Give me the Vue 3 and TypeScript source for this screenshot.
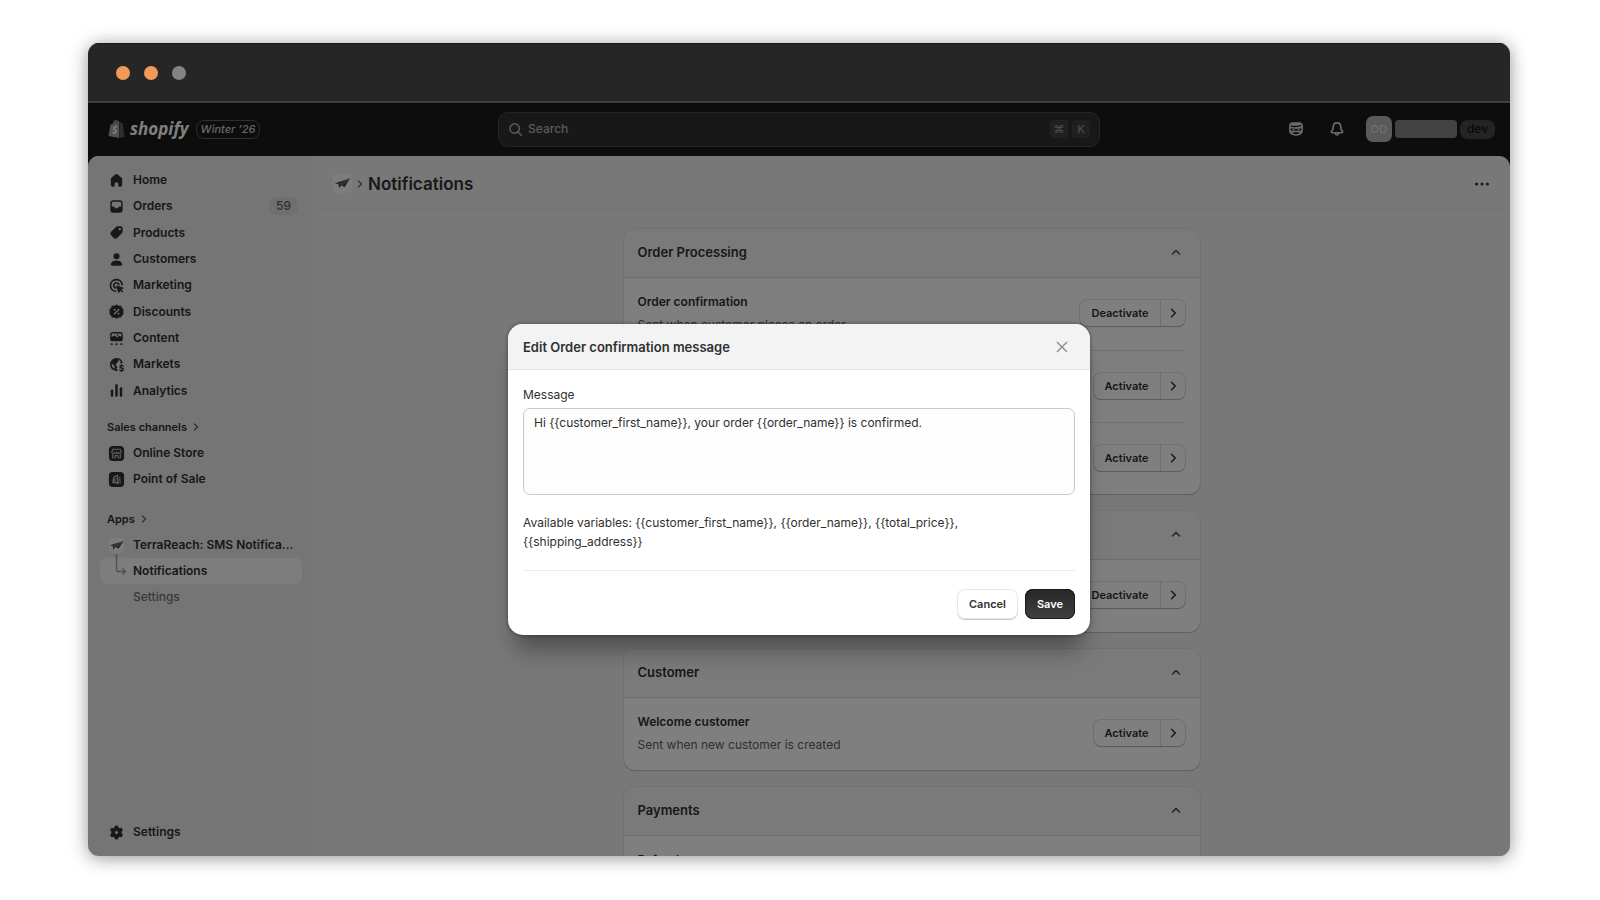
<script setup lang="ts">
import { ref } from 'vue'

interface NavItem {
  label: string
  icon: string
  badge?: string
}

interface Row {
  title?: string
  description?: string
  action?: string
}

interface Section {
  title: string
  rows: Row[]
}

const icons: Record<string, string> = {
  home: '<path d="M8.7 3.7a2 2 0 0 1 2.6 0l4 3.5A2.2 2.2 0 0 1 16 8.9v5.6a2 2 0 0 1-2 2h-1.2a.8.8 0 0 1-.8-.8v-2.2a1.5 1.5 0 0 0-1.5-1.5h-1A1.5 1.5 0 0 0 8 13.5v2.2a.8.8 0 0 1-.8.8H6a2 2 0 0 1-2-2V8.9a2.2 2.2 0 0 1 .7-1.7z"/>',
  orders: '<path fill-rule="evenodd" d="M6.5 3.500A3 3 0 0 0 3.500 6.500v7a3 3 0 0 0 3 3h7a3 3 0 0 0 3-3v-7a3 3 0 0 0-3-3zM5 6.500A1.500 1.500 0 0 1 6.500 5h7A1.500 1.500 0 0 1 15 6.500V10h-1.700c-.6 0-1.100.3-1.400.8l-.3.6a.8.8 0 0 1-.7.400H9.100a.8.8 0 0 1-.7-.4l-.3-.6A1.600 1.600 0 0 0 6.700 10H5z"/>',
  products: '<path fill-rule="evenodd" d="M11.300 3.500h3a2.300 2.300 0 0 1 2.200 2.200v3a3 3 0 0 1-.9 2.100l-4.900 4.900a2.500 2.500 0 0 1-3.500 0l-2.900-2.900a2.500 2.500 0 0 1 0-3.500l4.900-4.900a3 3 0 0 1 2.100-.9zM13.500 7.700a1.200 1.200 0 1 0 0-2.400 1.200 1.200 0 0 0 0 2.400z"/>',
  customers: '<circle cx="10" cy="6.500" r="3.200"/><path d="M10 11c-3 0-5.200 1.300-6 3.400-.4 1 .4 2.100 1.500 2.100h9c1.100 0 1.900-1.100 1.500-2.100-.8-2.100-3-3.400-6-3.400z"/>',
  marketing: '<path fill="none" stroke="currentColor" stroke-width="1.700" stroke-linecap="round" d="M16 9a6.200 6.200 0 1 0-7 7.100M12.600 9.200A2.800 2.800 0 1 0 9.200 12.600"/><path d="M10.200 9.900l6.800 2.300c.6.200.6 1 0 1.200l-2 .9 2 2-1.100 1.100-2-2-.9 1.900c-.2.600-1 .5-1.200 0l-2.200-6.700c-.1-.4.200-.8.600-.7z"/>',
  discounts: '<path fill-rule="evenodd" d="M8.400 3.600a2.200 2.200 0 0 1 3.200 0l.5.400.7-.1a2.200 2.200 0 0 1 2.800 1.700l.2.900.7.400a2.200 2.200 0 0 1 .7 3.100l-.2.400.2.500a2.200 2.200 0 0 1-1 3l-.5.300-.1.500a2.200 2.200 0 0 1-2.700 1.700l-.8-.1-.5.400a2.200 2.200 0 0 1-3.200 0l-.5-.4-.8.100a2.200 2.200 0 0 1-2.700-1.700l-.1-.6-.6-.3a2.200 2.200 0 0 1-.9-3l.2-.400-.2-.4a2.200 2.200 0 0 1 .8-3.100l.6-.4.200-.8a2.200 2.200 0 0 1 2.700-1.800l.8.100zM12.400 6.900L6.900 12.400l.9.900 5.500-5.500zM8 9a1 1 0 1 0 0-2 1 1 0 0 0 0 2zM12.200 13.200a1 1 0 1 0 0-2 1 1 0 0 0 0 2z"/>',
  content: '<path fill-rule="evenodd" d="M6 3.200a2.700 2.700 0 0 0-2.700 2.700v4.400A2.700 2.700 0 0 0 6 13h8a2.700 2.700 0 0 0 2.700-2.700V5.900A2.700 2.700 0 0 0 14 3.200zM6 4.700h8c.7 0 1.200.5 1.200 1.200v2.300l-.8-.6a2 2 0 0 0-2.500.2l-1.200 1.100-1.800-1.500a2 2 0 0 0-2.500 0l-1.600 1.300V5.900c0-.7.500-1.200 1.200-1.200zM11 7a.9.9 0 1 0 0-1.800A.9.900 0 0 0 11 7z"/><path d="M3.500 15.200h2.700v1.500H3.500zM8.600 15.200h2.800v1.500H8.600zM13.800 15.200h2.700v1.500h-2.700z"/>',
  markets: '<path fill-rule="evenodd" d="M10 3.200a6.800 6.800 0 1 0 1.600 13.400l-1.300-1.800c-.3-.4-.3-1 .1-1.400l.5-.5-1.500-2.400a1 1 0 0 1 .1-1.100l2.500-2.800c.2-.2.300-.6.200-.9l-.6-1.300L13 5.500l1.500 1.400-.8 2.100 2.900-.7A6.800 6.800 0 0 0 10 3.200zM5 9l2.800 2.300.5 3.300A5.300 5.300 0 0 1 5 9z"/><path fill="none" stroke="currentColor" stroke-width="1.500" stroke-linecap="round" d="M17 11.700c-.6-.7-3.300-.8-3.300.8 0 1.700 3.500.8 3.500 2.600 0 1.600-2.800 1.600-3.700.6M15.400 10.200v.8M15.400 16.600v.8"/>',
  analytics: '<rect x="4" y="9" width="2.600" height="7.500" rx="1.100"/><rect x="8.700" y="3.500" width="2.600" height="13" rx="1.100"/><rect x="13.400" y="6.500" width="2.600" height="10" rx="1.100"/>',
  settings: '<path fill-rule="evenodd" d="M8.800 3.200h2.400l.6 1.900 1.300.8 2-.5 1.200 2.100L15 9v2l1.300 1.500-1.200 2.100-2-.5-1.300.8-.6 1.900H8.800l-.6-1.900-1.300-.8-2 .5-1.200-2.100L5 11V9L3.700 7.500l1.200-2.100 2 .5 1.300-.8zM10 12a2 2 0 1 0 0-4 2 2 0 0 0 0 4z" stroke="currentColor" stroke-width="1" stroke-linejoin="round"/>',
  store: '<rect x="2" y="2" width="16" height="16" rx="4"/><path fill="none" stroke="#bdbdbd" stroke-width="1.200" stroke-linejoin="round" d="M6 5.500h8l1 3c0 1.600-2.400 1.600-2.600.2-.3 1.500-2.200 1.500-2.400 0-.2 1.500-2.100 1.500-2.400 0C7.400 10.100 5 10.100 5 8.500zM6 10.500v4h2.500v-2.200h3v2.200H14v-4"/>',
  pos: '<rect x="2" y="2" width="16" height="16" rx="4"/><path fill="#bdbdbd" d="M6.500 7l5-2.200 1 9.900-7-1z"/><path fill="#8c8c8c" d="M12.300 6.500l1.600.7.900 6.700-1.700.7z"/><path fill="none" stroke="#303030" stroke-width="1.200" d="M10.700 8c-1-.6-2.400-.1-2.300.9.100.8 1.900 1 1.800 2-.1 1.100-1.500 1.200-2.500.6"/>',
}

const mainNav: NavItem[] = [
  { label: 'Home', icon: 'home' },
  { label: 'Orders', icon: 'orders', badge: '59' },
  { label: 'Products', icon: 'products' },
  { label: 'Customers', icon: 'customers' },
  { label: 'Marketing', icon: 'marketing' },
  { label: 'Discounts', icon: 'discounts' },
  { label: 'Content', icon: 'content' },
  { label: 'Markets', icon: 'markets' },
  { label: 'Analytics', icon: 'analytics' },
]

const channels: NavItem[] = [
  { label: 'Online Store', icon: 'store' },
  { label: 'Point of Sale', icon: 'pos' },
]

const sections: Section[] = [
  {
    title: 'Order Processing',
    rows: [
      { title: 'Order confirmation', description: 'Sent when customer places an order', action: 'Deactivate' },
      { action: 'Activate' },
      { action: 'Activate' },
    ],
  },
  { title: '', rows: [{ action: 'Deactivate' }] },
  {
    title: 'Customer',
    rows: [{ title: 'Welcome customer', description: 'Sent when new customer is created', action: 'Activate' }],
  },
  { title: 'Payments', rows: [{ title: 'Refund' }] },
]

const message = ref('Hi {{customer_first_name}}, your order {{order_name}} is confirmed.')
const variables = ['customer_first_name', 'order_name', 'total_price', 'shipping_address']
  .map((name) => `{{${name}}}`)
  .join(', ')
</script>

<template>
  <div class="page">
    <div class="window">
      <div class="titlebar">
        <span class="dot"></span>
        <span class="dot"></span>
        <span class="dot muted"></span>
      </div>

      <div class="screen">
        <header class="topbar">
          <div class="brand">
            <svg class="bag" viewBox="0 0 18 20" aria-hidden="true">
              <path fill="#a3a3a3" d="M2.600 5.300l2.300-.7C5.500 2.300 7 .5 8.700.5c.8 0 1.300.5 1.600 1.300l1.400-.2.300 18L.5 17.500z" />
              <path fill="#5c5c5c" d="M12.100 2l1.300 1.500 2 .2 2.100 14.500-5.300 1.400z" />
              <path fill="none" stroke="#5c5c5c" stroke-width=".9" d="M6 5.300c.3-2 1.500-3.700 2.700-3.700 1 0 1.300 1.200 1.200 2.600" />
              <path fill="none" stroke="#f2f2f2" stroke-width="1.900" d="M9.800 7.800c-1.700-.8-3.600-.2-3.600 1.400 0 1.500 2.600 1.600 2.600 3.400 0 1.800-2.200 2.100-4.100.9" />
            </svg>
            <span class="wordmark">shopify</span>
            <span class="edition">Winter ’26</span>
          </div>
          <label class="search">
            <svg viewBox="0 0 20 20" class="icon" aria-hidden="true">
              <path fill="none" stroke="currentColor" stroke-width="1.800" stroke-linecap="round" d="M13 13l3.800 3.800M14.500 8.800a5.500 5.500 0 1 1-11 0 5.500 5.500 0 0 1 11 0z" />
            </svg>
            <input type="search" placeholder="Search" aria-label="Search" />
            <kbd>⌘</kbd>
            <kbd>K</kbd>
          </label>
          <div class="account">
            <button class="plain" aria-label="Assistant">
              <svg viewBox="0 0 20 20" class="icon" aria-hidden="true">
                <path fill="currentColor" fill-rule="evenodd" d="M6 2.500C3.800 2.500 2.300 4.300 2.300 6.500v5c0 3.500 2.700 6 7.700 6s7.700-2.500 7.700-6v-5c0-2.200-1.500-4-3.700-4zM4.200 5.900c2 .9 8 .9 11.600-.6v1.400c-3.500 1.500-8.800 1.500-11.600.7zM4 9.200c3 .9 9 .9 12 0v2.600c-2.300.9-3.800.6-6-.4-2.200 1-3.700 1.300-6 .4zM5.300 14c1.800.2 3.200-.2 4.700-1 1.500.8 2.900 1.200 4.700 1-1 1.300-2.500 1.900-4.700 1.900s-3.700-.6-4.700-1.900z" />
                <circle cx="7" cy="10.700" r="1" fill="currentColor" />
                <circle cx="13" cy="10.700" r="1" fill="currentColor" />
              </svg>
            </button>
            <button class="plain" aria-label="Alerts">
              <svg viewBox="0 0 20 20" class="icon" aria-hidden="true">
                <path fill="none" stroke="currentColor" stroke-width="1.800" stroke-linejoin="round" stroke-linecap="round" d="M10 3.200c-2.500 0-4.100 1.900-4.100 4.200 0 2.600-.6 3.700-1.800 4.900-.8.800-.4 1.900.7 1.900h10.400c1.100 0 1.500-1.100.7-1.900-1.200-1.200-1.800-2.300-1.800-4.900 0-2.300-1.600-4.200-4.100-4.200zM8 14.500c.2 1.500 1 2.200 2 2.200s1.800-.7 2-2.200" />
              </svg>
            </button>
            <button class="profile">
              <span class="avatar">OD</span>
              <span class="redacted"></span>
              <span class="env">dev</span>
            </button>
          </div>
        </header>

        <div class="panel">
          <nav class="sidebar" aria-label="Main">
            <ul class="main-list">
              <li v-for="item in mainNav" :key="item.label">
                <a href="#">
                  <svg class="icon" viewBox="0 0 20 20" aria-hidden="true" v-html="icons[item.icon]"></svg>
                  <span>{{ item.label }}</span>
                  <span v-if="item.badge" class="badge">{{ item.badge }}</span>
                </a>
              </li>
            </ul>

            <a href="#" class="group">
              Sales channels
              <svg viewBox="0 0 8 8" class="mini" aria-hidden="true"><path d="M2.500 1l3 3-3 3" /></svg>
            </a>
            <ul>
              <li v-for="item in channels" :key="item.label">
                <a href="#">
                  <svg class="icon" viewBox="0 0 20 20" aria-hidden="true" v-html="icons[item.icon]"></svg>
                  <span>{{ item.label }}</span>
                </a>
              </li>
            </ul>

            <a href="#" class="group">
              Apps
              <svg viewBox="0 0 8 8" class="mini" aria-hidden="true"><path d="M2.500 1l3 3-3 3" /></svg>
            </a>
            <ul>
              <li>
                <a href="#">
                  <svg class="icon" viewBox="0 0 20 20" aria-hidden="true">
                    <rect x="2" y="2" width="16" height="16" rx="4" fill="#f8f8f8" />
                    <path fill="#555" d="M3 9.700L17.500 5.200l-5.300 8.300-3.300-1.900-2.400 2.900-.5-3.900z" />
                    <path fill="none" stroke="#999" stroke-width=".6" d="M6.200 11L17 5.500 8.900 11.600" />
                  </svg>
                  <span>TerraReach: SMS Notifica...</span>
                </a>
              </li>
              <li>
                <a href="#" class="active" aria-current="page">
                  <svg class="icon branch" viewBox="0 0 19 26" aria-hidden="true">
                    <path d="M9.500-4V11.500a2 2 0 0 0 2 2H18M15.500 10.500l3 3-3 3" />
                  </svg>
                  <span>Notifications</span>
                </a>
              </li>
              <li>
                <a href="#" class="child"><span>Settings</span></a>
              </li>
            </ul>

            <a href="#" class="bottom">
              <svg class="icon" viewBox="0 0 20 20" aria-hidden="true" v-html="icons.settings"></svg>
              <span>Settings</span>
            </a>
          </nav>

          <main>
            <div class="page-head">
              <svg class="app-icon" viewBox="0 0 20 20" aria-hidden="true">
                <rect width="20" height="20" rx="4" fill="#fbfbfb" />
                <path fill="#4a4a4a" d="M2 9.800L18 4.500l-5.700 9.500-3.500-2.200-2.400 3.200-.6-4.300z" />
                <path fill="none" stroke="#999" stroke-width=".6" d="M6 11L17.500 4.800 8.800 11.800" />
              </svg>
              <svg viewBox="0 0 8 8" class="mini" aria-hidden="true"><path d="M2.500 1l3 3-3 3" /></svg>
              <h1>Notifications</h1>
              <button class="plain more" aria-label="More actions">
                <svg viewBox="0 0 20 20" class="icon" aria-hidden="true">
                  <circle cx="4" cy="10" r="1.700" /><circle cx="10" cy="10" r="1.700" /><circle cx="16" cy="10" r="1.700" />
                </svg>
              </button>
            </div>

            <div class="cards">
              <section v-for="(section, s) in sections" :key="s" class="card">
                <div class="card-head">
                  <h2>{{ section.title }}</h2>
                  <button class="plain" aria-label="Collapse">
                    <svg viewBox="0 0 12 12" class="caret" aria-hidden="true"><path d="M2.500 8L6 4.500 9.500 8" /></svg>
                  </button>
                </div>
                <div v-for="(row, r) in section.rows" :key="r" class="row">
                  <div class="row-text">
                    <h3>{{ row.title }}</h3>
                    <p>{{ row.description }}</p>
                  </div>
                  <div v-if="row.action" class="segmented">
                    <button>{{ row.action }}</button>
                    <button class="next" aria-label="Edit">
                      <svg viewBox="0 0 12 12" class="caret" aria-hidden="true"><path d="M4.500 2.200L8.300 6 4.500 9.800" /></svg>
                    </button>
                  </div>
                </div>
              </section>
            </div>
          </main>
        </div>

        <div class="backdrop">
          <div class="modal" role="dialog" aria-modal="true" aria-labelledby="modal-title">
            <div class="modal-head">
              <h2 id="modal-title">Edit Order confirmation message</h2>
              <button class="plain" aria-label="Close">
                <svg viewBox="0 0 12 12" class="close" aria-hidden="true"><path d="M1 1l10 10M11 1L1 11" /></svg>
              </button>
            </div>
            <form class="modal-body" @submit.prevent>
              <label for="message">Message</label>
              <textarea id="message" v-model="message" spellcheck="false"></textarea>
              <p>Available variables: {{ variables }}</p>
              <div class="actions">
                <button type="button" class="cancel">Cancel</button>
                <button type="submit" class="save">Save</button>
              </div>
            </form>
          </div>
        </div>
      </div>
    </div>
  </div>
</template>

<style>
body {
  margin: 0;
  background: #fff;
}
</style>

<style scoped>
* {
  box-sizing: border-box;
}

.page {
  height: 100vh;
  padding: 43px 90px 44px 88px;
  background: #fff;
  font: 500 12px/20px Inter, 'Liberation Sans', sans-serif;
  color: #303030;
}

h1, h2, h3, p, ul {
  margin: 0;
  padding: 0;
}

ul {
  list-style: none;
}

a {
  color: inherit;
  text-decoration: none;
}

button,
input,
textarea {
  font: inherit;
  color: inherit;
}

button {
  border: 0;
  padding: 0;
  background: none;
}

.plain {
  display: flex;
}

.icon {
  width: 19px;
  height: 19px;
  flex: none;
  fill: currentColor;
  overflow: visible;
}

.window {
  height: 100%;
  display: flex;
  flex-direction: column;
  border-radius: 11px;
  overflow: hidden;
  box-shadow: 0 2px 18px rgba(0, 0, 0, 0.42);
}

.titlebar {
  flex: none;
  height: 60px;
  display: flex;
  align-items: center;
  gap: 14px;
  padding: 0 28px;
  background: #262626;
  border-top: 1px solid #161616;
  border-bottom: 2px solid #404040;
}

.dot {
  width: 14px;
  height: 14px;
  border-radius: 50%;
  background: #f29858;
}

.dot.muted {
  background: #848484;
}

.screen {
  position: relative;
  flex: 1;
  min-height: 0;
  display: flex;
  flex-direction: column;
  background: #1a1a1a;
}

.topbar {
  flex: none;
  height: 53px;
  display: grid;
  grid-template-columns: 1fr 602px 1fr;
  align-items: center;
  padding: 0 15px 1px;
}

.brand {
  display: flex;
  align-items: center;
  padding-left: 5px;
}

.bag {
  width: 17px;
  height: 20px;
}

.wordmark {
  margin: 0 7px 0 5px;
  font: italic 700 17px/24px 'Open Sans', sans-serif;
  color: #fff;
}

.edition {
  padding: 0 4px;
  border: 1px solid #5c5c5c;
  border-radius: 8px;
  font-size: 11px;
  font-style: italic;
  line-height: 17px;
  color: #ccc;
}

.search {
  height: 35px;
  display: flex;
  align-items: center;
  gap: 4px;
  padding: 0 9px 0 8px;
  border: 1px solid #4a4a4a;
  border-radius: 10px;
  background: #303030;
  color: #b5b5b5;
}

.search input {
  flex: 1;
  min-width: 0;
  padding: 0;
  border: 0;
  outline: 0;
  background: none;
}

.search .icon {
  width: 17px;
  height: 17px;
}

.search input::placeholder {
  color: #b5b5b5;
}

kbd {
  width: 18px;
  height: 18px;
  border-radius: 4px;
  background: #404040;
  font: 500 11px/18px Inter, 'DejaVu Sans', sans-serif;
  text-align: center;
  color: #9a9a9a;
}

.account {
  display: flex;
  justify-content: flex-end;
  align-items: center;
  gap: 23px;
  color: #d6d6d6;
}

.account .icon {
  width: 18px;
  height: 18px;
}

.profile {
  display: flex;
  align-items: center;
  gap: 3px;
  margin-left: -3px;
}

.avatar {
  width: 26px;
  height: 26px;
  border-radius: 7px;
  background: #b4b5b8;
  font-size: 11px;
  line-height: 26px;
  color: #e0e0e0;
}

.redacted {
  width: 62px;
  height: 18px;
  border-radius: 4px;
  background: #858585;
}

.env {
  width: 35px;
  height: 19px;
  border-radius: 8px;
  background: #484848;
  font-size: 12px;
  line-height: 18px;
  color: #111;
}

.panel {
  flex: 1;
  min-height: 0;
  display: flex;
  border-radius: 11px 11px 0 0;
  overflow: hidden;
  background: #f1f1f1;
}

.sidebar {
  flex: none;
  width: 225px;
  display: flex;
  flex-direction: column;
  padding: 11px 11px 11px 12px;
  background: #ebebeb;
  font-weight: 600;
}

.sidebar li a,
.bottom {
  height: 26px;
  display: flex;
  align-items: center;
  gap: 7px;
  padding: 0 4px 0 7px;
  border-radius: 7px;
  white-space: nowrap;
}

.main-list {
  display: grid;
  grid-auto-rows: 1fr;
  align-items: center;
  min-height: 237px;
}

.badge {
  margin-left: auto;
  padding: 0 7px;
  border-radius: 7px;
  background: #dedede;
  line-height: 18px;
  font-weight: 500;
  font-size: 12px;
  color: #616161;
}

.group {
  display: flex;
  align-items: center;
  gap: 5px;
  height: 26px;
  margin-top: 10px;
  padding: 0 7px;
  font-size: 11px;
}

.sidebar ul + .group ~ .group {
  margin-top: 14px;
}

.mini {
  width: 8px;
  height: 8px;
  fill: none;
  stroke: #616161;
  stroke-width: 1.3;
  stroke-linecap: round;
}

.sidebar .active {
  background: #fafafa;
}

.branch {
  height: 26px;
  fill: none;
  stroke: #a0a0a0;
  stroke-width: 1.4;
}

.sidebar .child {
  padding-left: 33px;
  font-weight: 500;
  color: #707070;
}

.bottom {
  margin-top: auto;
}

main {
  flex: 1;
  min-width: 0;
}

.page-head {
  height: 53px;
  display: flex;
  align-items: center;
  gap: 4px;
  padding: 3px 19px 0 20px;
  border-bottom: 1px solid #e9e9e9;
}

.app-icon {
  width: 19px;
  height: 19px;
}

h1 {
  font-size: 17px;
  font-weight: 600;
  line-height: 24px;
}

.more {
  margin-left: auto;
}

.more .icon {
  width: 18px;
  height: 18px;
}

.cards {
  width: 576px;
  max-width: 100%;
  margin: 20px auto 0;
  display: flex;
  flex-direction: column;
  gap: 17px;
}

.card {
  border-radius: 11px;
  background: #fff;
  box-shadow: 0 1px 1px #bcbcbc, 0 0 0 1px #e4e4e4;
}

.card-head {
  height: 49px;
  display: flex;
  align-items: center;
  justify-content: space-between;
  padding: 0 18px 2px 14px;
  border-bottom: 1px solid #dadada;
  border-radius: 11px 11px 0 0;
  background: #f5f5f5;
}

h2 {
  font-size: 13px;
  font-weight: 600;
  line-height: 20px;
}

h3 {
  font-size: 12px;
  font-weight: 600;
  line-height: 20px;
}

.caret {
  width: 12px;
  height: 12px;
  fill: none;
  stroke: #4a4a4a;
  stroke-width: 1.5;
  stroke-linecap: round;
  stroke-linejoin: round;
}

.row {
  height: 72px;
  margin: 0 15px 0 14px;
  padding-bottom: 2px;
  display: flex;
  justify-content: space-between;
  align-items: center;
}

.row + .row {
  border-top: 1px solid #e3e3e3;
}

.row-text h3 {
  min-height: 20px;
}

.row-text p {
  min-height: 20px;
  margin-top: 3px;
  font-weight: 400;
  color: #616161;
}

.segmented {
  display: flex;
  height: 26px;
  border-radius: 7px;
  background: #fff;
  box-shadow: 0 1px 1px #b4b4b4, 0 0 0 1px #e3e3e3;
  font-size: 11px;
  font-weight: 600;
}

.segmented button {
  padding: 0 11px;
}

.segmented .next {
  display: flex;
  align-items: center;
  padding: 0 6px;
  border-left: 1px solid #dcdcdc;
}

.segmented .caret {
  stroke: #303030;
}

.backdrop {
  position: absolute;
  inset: 0;
  display: flex;
  align-items: center;
  justify-content: center;
  background: rgba(0, 0, 0, 0.5);
}

.modal {
  width: 582px;
  max-width: 90%;
  border-radius: 15px;
  overflow: hidden;
  background: #fff;
  box-shadow: 0 22px 22px -8px rgba(20, 20, 24, 0.42), 0 0 4px rgba(0, 0, 0, 0.4);
}

.modal-head {
  height: 46px;
  display: flex;
  align-items: center;
  justify-content: space-between;
  padding: 1px 22px 0 15px;
  border-bottom: 1px solid #e3e3e3;
  background: #f3f3f3;
}

.close {
  width: 12px;
  height: 12px;
  fill: none;
  stroke: #8a8a8a;
  stroke-width: 1.4;
}

.modal-body {
  display: flex;
  flex-direction: column;
  padding: 15px 15px 16px;
}

.modal-body label {
  font-weight: 400;
  margin-bottom: 3px;
}

textarea {
  height: 87px;
  padding: 4px 10px;
  border: 1px solid #c8c8c8;
  border-radius: 7px;
  background: #fdfdfd;
  font-weight: 400;
  outline: 0;
  resize: none;
}

.modal-body p {
  margin: 18px 0 19px;
  font-weight: 400;
  line-height: 19px;
}

.actions {
  display: flex;
  justify-content: flex-end;
  gap: 7px;
  padding-top: 18px;
  border-top: 1px solid #ebebeb;
}

.actions button {
  height: 30px;
  padding: 0 12px;
  border-radius: 8px;
  font-size: 11px;
  font-weight: 600;
}

.cancel {
  background: #fff;
  box-shadow: 0 1px 0 #c4c4c4, inset 0 0 0 1px #e6e6e6;
}

.save {
  background: linear-gradient(#262626, #404040);
  box-shadow: inset 0 0 0 1px #1a1a1a;
  color: #fff;
}
</style>
